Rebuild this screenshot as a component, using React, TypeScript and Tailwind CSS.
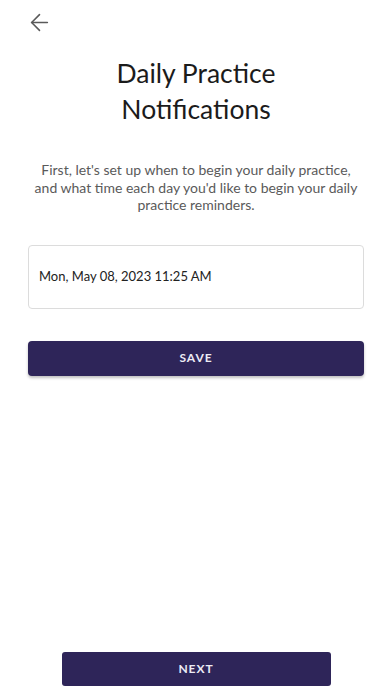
import { ArrowLeft } from 'lucide-react'

export default function App() {
  return (
    <div className="flex h-[696px] w-[392px] flex-col bg-white font-['Lato',sans-serif]">
      {/* Header */}
      <div className="px-[25px] pt-[8px]">
        <button className="flex h-[28px] w-[28px] items-center justify-center text-[#5a5a5a]">
          <ArrowLeft size={27} strokeWidth={1.4} />
        </button>
      </div>

      <h1 className="mt-[19px] text-center text-[26.5px] leading-[36px] text-[#1b1b1b]">
        Daily Practice
        <br />
        Notifications
      </h1>

      <p className="mx-auto mt-[34px] w-[328px] text-center text-[14px] leading-[17.5px] text-[#5a5a5a]">
        First, let's set up when to begin your daily practice, and what time each day you'd like to begin your daily practice reminders.
      </p>

      <div className="mx-[28px] mt-[31px] flex h-[64px] items-center rounded-[4px] border border-[#dcdcdc] px-[10px] text-[13px] text-[#222]">
        Mon, May 08, 2023 11:25 AM
      </div>

      <button className="mx-[28px] mt-[32px] h-[35px] rounded-[4px] bg-[#2e2559] text-[12px] font-bold tracking-[0.08em] text-[#ecebf5] shadow-[0_2px_3px_rgba(0,0,0,0.25)]">
        SAVE
      </button>

      <div className="flex-1" />

      <button className="mx-auto mb-[10px] h-[34px] w-[269px] rounded-[3px] bg-[#2e2559] text-[12px] font-bold tracking-[0.08em] text-[#ecebf5]">
        NEXT
      </button>
    </div>
  )
}
